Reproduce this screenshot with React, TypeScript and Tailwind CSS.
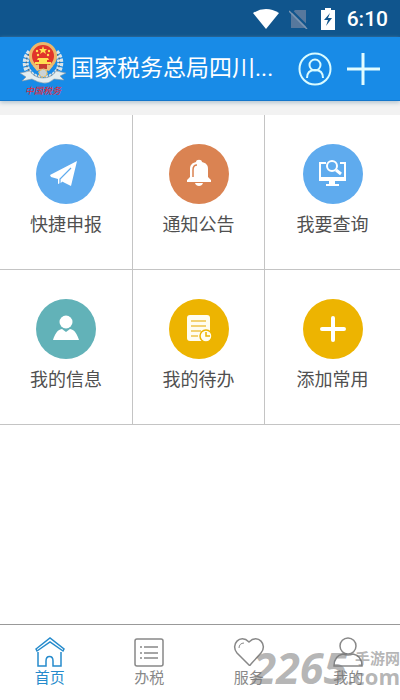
import type { ReactNode } from "react";

function StatusBar() {
    return (
        <div className="flex h-[37px] items-center justify-end bg-[#10558d] pr-3 text-white">
            <svg width="26" height="20" viewBox="0 0 26 20" className="mr-2.5" aria-hidden="true">
                <path d="M0 4Q13-4 26 4L13 20Z" fill="currentColor" />
            </svg>
            <svg width="20" height="20" viewBox="0 0 20 20" className="mr-3" aria-hidden="true">
                <path d="M2 5 6 1H17V19H2Z" fill="#57789d" />
                <path d="M1 0 20 19" stroke="#10558d" strokeWidth="2" />
                <path d="M0 2 18 20" stroke="#7b96b3" strokeWidth="1.5" />
            </svg>
            <svg width="14" height="22" viewBox="0 0 14 22" className="mr-3" aria-hidden="true">
                <path d="M4 0h6v2h4v20H0V2h4Z" fill="currentColor" />
                <path d="M9 5 3 12h4l-2 6 6-8H7Z" fill="#10558d" />
            </svg>
            <span className="font-[Roboto,sans-serif] text-[21px] leading-6 font-medium">6:10</span>
        </div>
    );
}

function Emblem() {
    return (
        <svg width="46" height="54" viewBox="0 0 46 54" className="shrink-0" role="img" aria-label="中国税务">
            <path d="M10 10C2 19 5 34 21 37M36 10C44 19 41 34 25 37" fill="none" stroke="#dce4e8" strokeWidth="6" strokeDasharray="3 1" />
            <path d="M9 12C3 20 7 32 20 36M37 12C43 20 39 32 26 36" fill="none" stroke="#52687c" strokeWidth="1.2" strokeDasharray="2 2" />
            <path d="M0 31 10 29Q14 36 23 36T36 29L46 31 40 34 44 38 34 37Q29 42 23 41T12 37L2 39 6 35Z" fill="#e3edf0" stroke="#8799a4" strokeWidth=".6" />
            <circle cx="23" cy="14" r="12.5" fill="#e1342b" stroke="#edb76a" strokeWidth="3" />
            <path d="m23 4 1 3h3l-2 2 1 3-3-2-3 2 1-3-2-2h3Z" fill="#ffe052" />
            <g fill="#ffe052">
                <circle cx="17" cy="9" r="1.2" />
                <circle cx="29" cy="9" r="1.2" />
                <circle cx="18" cy="13" r="1.2" />
                <circle cx="28" cy="13" r="1.2" />
                <path d="M18 16h10l1 2h-2v2h4v2H15v-2h4v-2h-2Z" />
            </g>
            <path d="M13 24Q23 20 33 24L29 29Q23 26 17 29Z" fill="#efc07a" />
            <path d="M19 22h8v5h-8Z" fill="#c73d30" />
            <circle cx="23" cy="31" r="4" fill="#cbd3d5" stroke="#e7bd66" strokeWidth="1.5" strokeDasharray="2 1" />
            <text x="23" y="52" textAnchor="middle" fontFamily="Noto Sans CJK SC, sans-serif" fontSize="9" fontStyle="italic" fontWeight="500" fill="#d62f48">中国税务</text>
        </svg>
    );
}

function Header() {
    return (
        <header className="relative flex h-16 items-center border-b border-[#1477cc] bg-[#188be7] px-5 text-white shadow-[0_2px_4px_#b8c7d1]">
            <Emblem />
            <h1 className="ml-[5px] min-w-0 flex-1 text-[23px] leading-8 font-normal whitespace-nowrap">国家税务总局四川...</h1>
            <button type="button" aria-label="账户" className="shrink-0">
                <svg width="34" height="34" viewBox="0 0 34 34" fill="none" stroke="#d9fbff" strokeWidth="2">
                    <circle cx="17" cy="17" r="15.5" />
                    <circle cx="17" cy="13" r="5.5" />
                    <path d="M9 26c0-5 3-8 8-8s8 3 8 8" />
                </svg>
            </button>
            <button type="button" aria-label="添加" className="ml-3.5 shrink-0">
                <svg width="34" height="34" viewBox="0 0 34 34" stroke="#e1fcff" strokeWidth="3">
                    <path d="M1 17h33M17 1v32" />
                </svg>
            </button>
        </header>
    );
}

const services: { label: string; color: string; icon: ReactNode }[] = [
    {
        label: "快捷申报",
        color: "bg-[#5fabee]",
        icon: (
            <>
                <path d="M14 31 41 17 35 42 27 38 22 40V35L15 33Z" fill="#fff" />
                <path d="M35 24 24 35v6M27 38l-3 3" fill="none" stroke="#5fabee" strokeWidth="1.2" />
            </>
        ),
    },
    {
        label: "通知公告",
        color: "bg-[#da8352]",
        icon: (
            <>
                <path d="M18 38v-2l3-3v-8c0-4 2-6 6-7 0-3 6-3 6 0 4 1 6 3 6 7v8l3 3v2Z" fill="#fff" />
                <path d="M26 39h8c-1 4-7 4-8 0Z" fill="#fff" />
                <path d="M24 33v-7c0-3 1-5 4-5" fill="none" stroke="#da8352" strokeWidth="1.5" />
            </>
        ),
    },
    {
        label: "我要查询",
        color: "bg-[#5fabee]",
        icon: (
            <g fill="none" stroke="#fff" strokeWidth="2">
                <path d="M23 19h-6v16h25V19h-5" />
                <path d="M16 35h27" strokeWidth="4" />
                <path d="M29 36v5" strokeWidth="6" />
                <path d="M23 41h13" />
                <circle cx="29" cy="22" r="5" />
                <path d="m33 26 5 4" strokeWidth="3" />
            </g>
        ),
    },
    {
        label: "我的信息",
        color: "bg-[#62b2b8]",
        icon: (
            <g fill="#fff">
                <circle cx="30" cy="23" r="6.5" />
                <path d="M17 41c2-6 4-10 9-11l4 3 4-3c5 1 7 5 9 11Z" />
            </g>
        ),
    },
    {
        label: "我的待办",
        color: "bg-[#edb401]",
        icon: (
            <>
                <rect x="18" y="16" width="23" height="26" rx="3" fill="#fffdf0" />
                <path d="M22 22h15M22 27h15M22 32h10M22 37h7" stroke="#efc44a" strokeWidth="1.5" />
                <circle cx="37" cy="37" r="6" fill="#fffdf0" stroke="#edb401" strokeWidth="1.5" />
                <path d="M37 33v4h4" fill="none" stroke="#edb401" strokeWidth="1.5" />
            </>
        ),
    },
    {
        label: "添加常用",
        color: "bg-[#edb401]",
        icon: <path d="M19 30h22M30 19v22" stroke="#fff" strokeWidth="4" strokeLinecap="round" />,
    },
];

function ServiceGrid() {
    return (
        <main className="grid grid-cols-[133fr_132fr_135fr] bg-white">
            {services.map((item) => (
                <button
                    key={item.label}
                    type="button"
                    className="flex flex-col items-center border-r border-b border-[#c4c4c4] pt-[29px] pb-[31px] text-[#505050] nth-[3n]:border-r-0"
                >
                    <span className={`size-15 rounded-full ${item.color}`}>
                        <svg viewBox="0 0 60 60" aria-hidden="true">{item.icon}</svg>
                    </span>
                    <span className="mt-2 text-[18px] leading-[26px]">{item.label}</span>
                </button>
            ))}
        </main>
    );
}

const tabs: { label: string; icon: ReactNode }[] = [
    {
        label: "首页",
        icon: (
            <>
                <path d="M4 15v14h8v-5c0-6 7-6 7 0v5h8V15" />
                <path d="M2 12 16 1l14 11-1 2L16 5 3 14Z" />
            </>
        ),
    },
    {
        label: "办税",
        icon: (
            <>
                <rect x="2" y="2" width="28" height="27" rx="2" />
                <path d="M11 10h14M11 16h14M11 21h14M7 10h2M7 16h2M7 21h2" />
            </>
        ),
    },
    {
        label: "服务",
        icon: (
            <>
                <path d="M16 28 4 16C-3 8 7-4 16 5c9-9 19 3 12 11L18 27Q17 29 16 28Z" />
                <path d="M6 11c0-3 2-5 5-5" strokeWidth="1" />
            </>
        ),
    },
    {
        label: "我的",
        icon: (
            <>
                <circle cx="16" cy="9" r="8" />
                <path d="M2 29c0-7 4-11 9-12q5 2 10 0c5 1 9 5 9 12Z" />
            </>
        ),
    },
];

function Watermark() {
    return (
        <div aria-hidden="true" className="pointer-events-none absolute right-0 bottom-1 flex h-[57px] items-center font-['Open_Sans',sans-serif] text-[#777]/55">
            <span className="text-[43px] leading-none font-bold italic">2265</span>
            <span className="flex flex-col items-end font-bold">
                <span className="font-['Noto_Sans_CJK_SC',sans-serif] text-[15px] leading-4">手游网</span>
                <span className="text-[22px] leading-5">.com</span>
            </span>
        </div>
    );
}

export default function App() {
    return (
        <div className="flex min-h-screen flex-col bg-white font-[Roboto,'Noto_Sans_CJK_SC',sans-serif]">
            <StatusBar />
            <Header />
            <div className="h-3.5 bg-[#f2f2f2]" />
            <ServiceGrid />
            <nav className="relative mt-auto grid h-19 grid-cols-4 border-t border-[#999] pt-3 pr-0.5">
                {tabs.map((tab, i) => (
                    <a
                        key={tab.label}
                        href="#"
                        aria-current={i === 0 ? "page" : undefined}
                        className={["flex flex-col items-center", i === 0 ? "text-[#268bcc]" : "text-[#888]"].join(" ")}
                    >
                        <svg width="32" height="31" viewBox="0 0 32 31" fill="none" stroke="currentColor" strokeWidth="1.5" aria-hidden="true">
                            {tab.icon}
                        </svg>
                        <span className="text-[15px] leading-5">{tab.label}</span>
                    </a>
                ))}
                <Watermark />
            </nav>
        </div>
    );
}
